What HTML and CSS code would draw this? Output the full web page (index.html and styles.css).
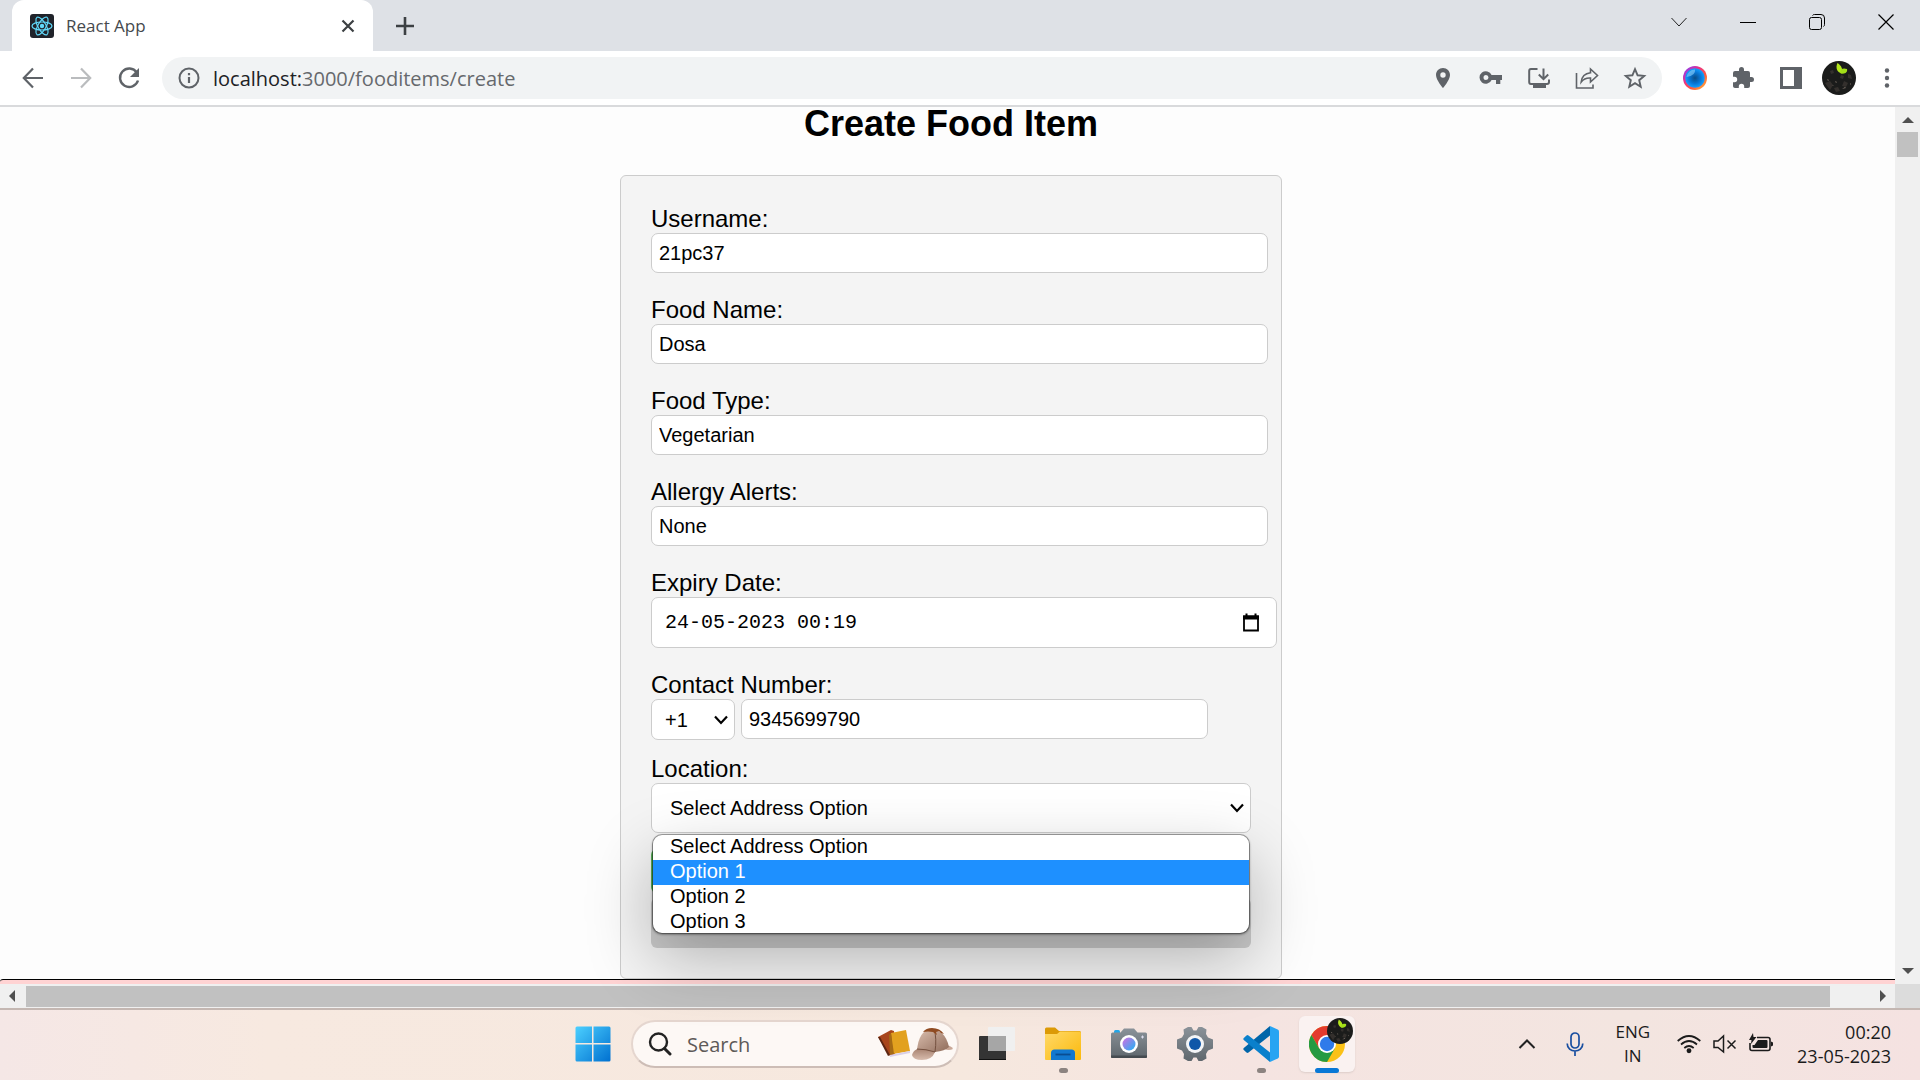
FILE: index.html
```html
<!DOCTYPE html>
<html lang="en">
<head>
<meta charset="utf-8">
<title>React App</title>
<link rel="stylesheet" href="styles.css">
</head>
<body>
<svg width="0" height="0" class="defs" aria-hidden="true">
  <defs>
    <linearGradient id="win" x1="0" y1="0" x2="1" y2="1"><stop offset="0" stop-color="#4cd0ff"/><stop offset="1" stop-color="#0070d0"/></linearGradient>
    <linearGradient id="fold" x1="0" y1="0" x2="1" y2="1"><stop offset="0" stop-color="#ffd968"/><stop offset="1" stop-color="#fbb90c"/></linearGradient>
    <linearGradient id="lens" x1="0" y1="0" x2="1" y2="1"><stop offset=".2" stop-color="#b07be6"/><stop offset="1" stop-color="#1cb4f4"/></linearGradient>
    <linearGradient id="grey" x1="0" y1="0" x2="0" y2="1"><stop offset="0" stop-color="#8a9299"/><stop offset="1" stop-color="#5f676d"/></linearGradient>
    <linearGradient id="hat" x1="0" y1="0" x2="1" y2="1"><stop offset="0" stop-color="#dcc0b0"/><stop offset="1" stop-color="#8f6b5a"/></linearGradient>
    <linearGradient id="brim" x1="0" y1="0" x2="0" y2="1"><stop offset="0" stop-color="#a98472"/><stop offset="1" stop-color="#d8bcae"/></linearGradient>
    <linearGradient id="ring" x1="0" y1="0" x2="1" y2="1"><stop offset=".1" stop-color="#8a3ff0"/><stop offset=".35" stop-color="#e8308c"/><stop offset=".65" stop-color="#ff5a3c"/><stop offset="1" stop-color="#ffc53a"/></linearGradient>
    <radialGradient id="orb"><stop offset="0" stop-color="#0a4c86"/><stop offset=".6" stop-color="#0878d8"/><stop offset="1" stop-color="#13a0ff"/></radialGradient>
    <symbol id="plant" viewBox="0 0 34 34">
      <circle cx="17" cy="17" r="17" fill="#1b1c1b"/>
      <path d="M3 22l5-2 3 4-3 5zM22 20l4 2-2 4-4-1zM12 27l4-1 2 4-4 1zM26 13l3 1 1 4-4-1zM8 10l3-1 1 3-3 1zM19 14l3 1-1 3-3-1z" fill="#34302d"/>
      <path d="M5 18l2 1-1 1zM13 20l2 1-1 1zM20 28l3-2 1 1zM28 22l1 1-1 1zM10 24l1 1 1 0z" fill="#7b6f66"/>
      <path d="M15.500 2c-2.500 5 0 10 4.500 10.500 1-4-.5-8-4.500-10.500z" fill="#b4e61c"/>
      <path d="M18 12c0-4 3-5.500 7-4 1 3.500-3 6-7 4z" fill="#a2de18"/>
    </symbol>
  </defs>
</svg>

<header class="tabs">
  <div class="tab">
    <svg class="favicon" viewBox="0 0 24 24"><rect width="24" height="24" rx="3" fill="#20232a"/><g fill="none" stroke="#61dafb" stroke-width="1.2"><ellipse cx="12" cy="12" rx="10" ry="4"/><ellipse cx="12" cy="12" rx="10" ry="4" transform="rotate(60 12 12)"/><ellipse cx="12" cy="12" rx="10" ry="4" transform="rotate(120 12 12)"/></g><circle cx="12" cy="12" r="2.2" fill="#61dafb"/></svg>
    <span class="tab-title">React App</span>
    <button class="icon-btn" aria-label="Close tab"><svg width="14" height="14" viewBox="0 0 14 14"><path d="M1.500 1.500l11 11M12.500 1.500l-11 11" stroke="#3c4043" stroke-width="2.200"/></svg></button>
  </div>
  <button class="icon-btn new-tab" aria-label="New tab"><svg width="18" height="18" viewBox="0 0 18 18"><path d="M9 0v18M0 9h18" stroke="#3c4043" stroke-width="2.600"/></svg></button>
  <div class="window-controls">
    <button class="icon-btn" aria-label="Search tabs"><svg width="16" height="16" viewBox="0 0 16 16"><path d="M.5 4L8 12l7.500-8" fill="none" stroke="#222"/></svg></button>
    <button class="icon-btn" aria-label="Minimize"><svg width="16" height="16" viewBox="0 0 16 16"><path d="M0 8.500h16" stroke="#000"/></svg></button>
    <button class="icon-btn" aria-label="Restore"><svg width="16" height="16" viewBox="0 0 16 16" fill="none" stroke="#000"><rect x=".5" y="3.500" width="12" height="12" rx="2"/><path d="M3.500 1.500Q4 .5 5.500.5H12Q15.500.5 15.500 4v6.500q0 1.500-1 2"/></svg></button>
    <button class="icon-btn" aria-label="Close"><svg width="16" height="16" viewBox="0 0 16 16"><path d="M.5.5l15 15M15.500.5l-15 15" stroke="#000" stroke-width="1.200"/></svg></button>
  </div>
</header>

<nav class="toolbar">
  <div class="nav-buttons">
    <button class="icon-btn" aria-label="Back"><svg width="24" height="24" viewBox="0 0 24 24"><path d="M22 12H3M12 2.500L2.800 12l9.200 9.500" fill="none" stroke="#5f6368" stroke-width="2.200"/></svg></button>
    <button class="icon-btn" aria-label="Forward"><svg width="24" height="24" viewBox="0 0 24 24"><path d="M2 12h19M12 2.500l9.200 9.500-9.200 9.500" fill="none" stroke="#babcbe" stroke-width="2.200"/></svg></button>
    <button class="icon-btn" aria-label="Reload"><svg width="24" height="24" viewBox="0 0 24 24"><path d="M19.800 6.500A9.200 9.200 0 1 0 21 14.500" fill="none" stroke="#5f6368" stroke-width="2.400"/><path d="M22 2v9h-9z" fill="#5f6368"/></svg></button>
  </div>
  <div class="omnibox">
    <svg width="22" height="22" viewBox="0 0 22 22"><circle cx="11" cy="11" r="9.500" fill="none" stroke="#5f6368" stroke-width="2"/><path d="M11 10v6M11 6v2.200" stroke="#5f6368" stroke-width="2.200"/></svg>
    <a class="url" href="#">localhost:<span class="path">3000/fooditems/create</span></a>
    <div class="omni-actions">
      <button class="icon-btn" aria-label="Location"><svg width="24" height="24" viewBox="0 0 24 24"><path d="M12 2C8 2 5 5 5 9c0 5 7 13 7 13s7-8 7-13c0-4-3-7-7-7zm0 9.700a2.700 2.700 0 1 1 0-5.400 2.700 2.700 0 0 1 0 5.400z" fill="#5f6368"/></svg></button>
      <button class="icon-btn" aria-label="Passwords"><svg width="24" height="24" viewBox="0 0 24 24"><path d="M12.600 9a6.300 6.300 0 1 0 0 5H17v4h4.300v-4H23V9zM7 14a2.500 2.500 0 1 1 0-5 2.500 2.500 0 0 1 0 5z" fill="#5f6368"/></svg></button>
      <button class="icon-btn" aria-label="Install"><svg width="24" height="24" viewBox="0 0 24 24"><path d="M10.500 3H4Q2.200 3 2.200 5v11Q2.200 18 4 18h16q2 0 2-2v-2.500M16.500 2.500v10M11.800 8.500l4.700 4.600 4.700-4.600" fill="none" stroke="#5f6368" stroke-width="2"/><path d="M6 18h13v4H6z" fill="#5f6368"/></svg></button>
      <button class="icon-btn" aria-label="Share"><svg width="24" height="24" viewBox="0 0 24 24" fill="none" stroke="#5f6368" stroke-width="1.600"><path d="M1.500 7v15h16.500v-3.500"/><path d="M15.500 3l7 6.500-7 6.500v-4c-4-.3-7 1-9.300 4 .5-5 3.500-8.500 9.300-9.200z"/></svg></button>
      <button class="icon-btn" aria-label="Bookmark"><svg width="24" height="24" viewBox="0 0 24 24"><path d="M12 3.200l2.600 6.100 6.600.6-5 4.300 1.500 6.500-5.700-3.500-5.700 3.500 1.500-6.500-5-4.300 6.600-.6z" fill="none" stroke="#5f6368" stroke-width="1.900"/></svg></button>
    </div>
  </div>
  <div class="extensions">
    <button class="icon-btn" aria-label="Extension"><svg width="24" height="24" viewBox="0 0 24 24"><circle cx="12" cy="12" r="12" fill="url(#ring)"/><circle cx="12" cy="12" r="9.800" fill="url(#orb)"/><path d="M3.500 11A8.500 8.500 0 0 1 12 3.500q1 6-8.500 7.500z" fill="#8fd0f8" opacity=".6"/></svg></button>
    <button class="icon-btn" aria-label="Extensions"><svg width="24" height="24" viewBox="0 0 24 24"><path d="M20.500 11H19V7a2 2 0 0 0-2-2h-4V3.500a2.500 2.500 0 0 0-5 0V5H4a2 2 0 0 0-2 2v3.800h1.500a2.700 2.700 0 0 1 0 5.400H2V20c0 1.100.9 2 2 2h3.800v-1.500a2.700 2.700 0 0 1 5.400 0V22H17a2 2 0 0 0 2-2v-4h1.500a2.500 2.500 0 0 0 0-5z" fill="#5f6368"/></svg></button>
    <button class="icon-btn" aria-label="Side panel"><svg width="24" height="24" viewBox="0 0 24 24"><path d="M1 1h22v22H1zM4 4v16h11V4z" fill="#5f6368" fill-rule="evenodd"/></svg></button>
    <button class="icon-btn" aria-label="Profile"><svg width="34" height="34"><use href="#plant"/></svg></button>
    <button class="icon-btn" aria-label="Menu"><svg width="24" height="24" viewBox="0 0 24 24" fill="#5f6368"><circle cx="12" cy="4.500" r="2.200"/><circle cx="12" cy="12" r="2.200"/><circle cx="12" cy="19.500" r="2.200"/></svg></button>
  </div>
</nav>

<div class="viewport">
  <main class="page">
    <div class="content">
    <h1>Create Food Item</h1>
    <form class="card">
      <div class="field"><label for="user">Username:</label><input id="user" class="text" type="text" value="21pc37"></div>
      <div class="field"><label for="food">Food Name:</label><input id="food" class="text" type="text" value="Dosa"></div>
      <div class="field"><label for="type">Food Type:</label><input id="type" class="text" type="text" value="Vegetarian"></div>
      <div class="field"><label for="allergy">Allergy Alerts:</label><input id="allergy" class="text" type="text" value="None"></div>
      <div class="field">
        <label for="expiry">Expiry Date:</label>
        <div class="date">
          <input id="expiry" type="text" value="24-05-2023 00:19">
          <button type="button" class="icon-btn" aria-label="Pick a date"><svg width="20" height="20" viewBox="0 0 20 20"><path d="M3 3.500h14v14H3z" fill="none" stroke="#000" stroke-width="1.800"/><path d="M2 2.500h16v4H2zM4.500.500h2v3h-2zM13.500.500h2v3h-2z"/></svg></button>
        </div>
      </div>
      <div class="field phone-field">
        <label for="phone">Contact Number:</label>
        <div class="phone">
          <div class="select code">
            <select aria-label="Country code"><option>+1</option></select>
            <svg width="14" height="10" viewBox="0 0 14 10"><path d="M1 1.500l6 6.500 6-6.500" fill="none" stroke="#000" stroke-width="2.200"/></svg>
          </div>
          <input id="phone" class="text" type="tel" value="9345699790">
        </div>
      </div>
      <div class="field location">
        <label for="location">Location:</label>
        <div class="select address">
          <select id="location"><option>Select Address Option</option><option>Option 1</option><option>Option 2</option><option>Option 3</option></select>
          <svg width="14" height="10" viewBox="0 0 14 10"><path d="M1 1.500l6 6.500 6-6.500" fill="none" stroke="#000" stroke-width="2.200"/></svg>
          <ul class="options" role="listbox" aria-label="Location">
            <li role="option">Select Address Option</li>
            <li role="option" class="active" aria-selected="true">Option 1</li>
            <li role="option">Option 2</li>
            <li role="option">Option 3</li>
          </ul>
        </div>
      </div>
      <div class="actions">
        <button type="button" class="locate" aria-label="Use location"></button>
        <button type="submit" class="submit" aria-label="Submit"></button>
      </div>
    </form>
    </div>
    <div class="alert-strip"></div>
  </main>
  <div class="vbar">
    <svg width="12" height="6" viewBox="0 0 12 6"><path d="M0 6l6-6 6 6z" fill="#505050"/></svg>
    <div class="thumb"></div>
    <svg width="12" height="6" viewBox="0 0 12 6"><path d="M0 0h12l-6 6z" fill="#505050"/></svg>
  </div>
  <div class="hbar">
    <svg width="6" height="12" viewBox="0 0 6 12"><path d="M6 0v12L0 6z" fill="#505050"/></svg>
    <div class="thumb"></div>
    <svg width="6" height="12" viewBox="0 0 6 12"><path d="M0 0v12l6-6z" fill="#505050"/></svg>
  </div>
  <div class="corner"></div>
</div>

<footer class="taskbar">
  <div class="apps">
    <button class="app" aria-label="Start"><svg width="36" height="36" viewBox="0 0 36 36" fill="url(#win)"><path d="M2 .500h15V17H.500V2Q.500.500 2 .500zM18.500.500H34q1.500 0 1.500 1.500v15h-17zM.500 18.500H17v17H2Q.500 35.500.500 34zM18.500 18.500h17V34q0 1.500-1.500 1.500H18.500z"/></svg></button>
    <div class="search">
      <svg width="24" height="24" viewBox="0 0 24 24"><circle cx="10.500" cy="10" r="8.500" fill="none" stroke="#222" stroke-width="2.400"/><path d="M16.500 16.500l5.500 5.500" stroke="#222" stroke-width="3" stroke-linecap="round"/></svg>
      <input type="search" aria-label="Search" placeholder="Search">
      <svg width="77" height="34" viewBox="0 0 77 34">
        <path d="M1 10L14 3l3 1 1 23-5 2z" fill="#a8451b"/><path d="M1 10l2 0 10 18-2 1z" fill="#5d2612"/>
        <path d="M14 6l15-3 4 21-17 3z" fill="#e2a11f"/><path d="M14 6l3 21-4 1-1-20z" fill="#a56a15"/><path d="M13 28l20-4v2l-20 4z" fill="#d9cfe8"/>
        <path d="M67 18q7 0 9 4-4 2-9 0z" fill="#c9a797"/>
        <path d="M40 23Q42 4 53 2q15 0 19 18-4 4-14 5z" fill="url(#hat)"/>
        <path d="M40 22q9 0 18 3-3 8-13 8-9 0-10-5 1-4 5-6z" fill="url(#brim)"/>
        <path d="M40 22q9 0 18 3M57 2q3 9 1 23" fill="none" stroke="#74503f"/>
        <path d="M46 5q3-4 9-4 8 0 12 6l-3-1-2-2-3 1 1 3-4-3q-5-1-10 0z" fill="#8f4b22"/>
      </svg>
    </div>
    <button class="app" aria-label="Task view"><svg width="36" height="36" viewBox="0 0 36 36"><rect y="10" width="27" height="24" rx="1" fill="#343434"/><rect y="33" width="27" height="1" fill="#111"/><rect x="9" y="1" width="27" height="24" rx="1" fill="#f0f0f0"/><path d="M9 10h18v15H10q-1 0-1-1z" fill="#a6a6a6"/></svg></button>
    <button class="app running" aria-label="File Explorer"><svg width="36" height="36" viewBox="0 0 36 36"><path d="M0 3q0-1.500 1.500-1.500H10L14 5H34.500Q36 5 36 6.500V12H0z" fill="#dc9a06"/><path d="M0 8h12l3-2.500h19.500Q36 5.500 36 7v26q0 1-1 1H1q-1 0-1-1z" fill="url(#fold)"/><path d="M6 34v-7q0-3.500 3.500-3.500h17Q30 23.500 30 27v7z" fill="#1278cf"/><path d="M10.500 28.500h15" stroke="#0a4d91" stroke-width="1.800"/></svg></button>
    <button class="app" aria-label="Camera"><svg width="36" height="36" viewBox="0 0 36 36"><path d="M3 7V5.500Q3 4 4.500 4h3Q9 4 9 5.500V7z" fill="#22a6e8"/><path d="M0 8q0-1.500 1.500-1.500h8L13 2.500h10l3.500 4h8Q36 6.500 36 8v23.500H0z" fill="url(#grey)"/><path d="M0 29.500h36V31q0 1-1 1H1q-1 0-1-1z" fill="#454b50"/><circle cx="18" cy="18" r="9" fill="#fff"/><circle cx="18" cy="18" r="6.500" fill="url(#lens)"/><path d="M31.500 9.500v3M30 11h3" stroke="#dde"/></svg></button>
    <button class="app" aria-label="Settings"><svg width="36" height="36" viewBox="0 0 36 36"><path d="M11 1h3.500l2 3.500h3L21.500 1H25l4.500 2.500-.5 4.500 2 3.500 5 2v9l-5 2-2 3.500.5 4.500L25 35h-3.500l-2-3.500h-3l-2 3.500H11l-4.500-2.500L7 28l-2-3.500-5-2v-9l5-2L7 8l-.5-4.500z" fill="url(#grey)"/><circle cx="18" cy="18" r="9" fill="#f3f5f7"/><circle cx="18" cy="18" r="6" fill="#0f57a8"/></svg></button>
    <button class="app running" aria-label="Visual Studio Code"><svg width="36" height="36" viewBox="0 0 36 36"><path d="M27 0v9.500L5.500 26.500Q4.500 27.300 3.500 26.500L.8 24Q-.2 23 .8 22z" fill="#0065a9"/><path d="M27 36v-9.500L5.500 9.500q-1-.8-2 0L.8 12q-1 1 0 2z" fill="#0a80cc"/><path d="M27 0l7.700 3.400Q36 4 36 5.500v25q0 1.500-1.300 2.100L27 36z" fill="#27a4f2"/></svg></button>
    <button class="app current" aria-label="Google Chrome">
      <svg width="44" height="50" viewBox="0 0 44 50"><circle cx="18" cy="32" r="18" fill="#fbc116"/><path d="M2.400 23A18 18 0 0 1 33.600 23L18 23.500l-7.800 13z" fill="#e33b2e"/><path d="M2.400 23A18 18 0 0 0 18 50l7.800-13.500H10.200z" fill="#259a42"/><circle cx="18" cy="32" r="9" fill="#fff"/><circle cx="18" cy="32" r="7.200" fill="#2f7bea"/><use href="#plant" x="18" y="6" width="26" height="26"/></svg>
    </button>
  </div>
  <div class="tray">
    <button class="icon-btn" aria-label="Hidden icons"><svg width="18" height="18" viewBox="0 0 18 18"><path d="M1.500 13L9 5.500l7.500 7.500" fill="none" stroke="#222" stroke-width="2"/></svg></button>
    <button class="icon-btn" aria-label="Microphone"><svg width="18" height="24" viewBox="0 0 18 24" fill="none" stroke="#1a4fa0" stroke-width="1.700"><rect x="5" y="1" width="8" height="15" rx="4"/><path d="M1.200 11.500c0 10 15.600 10 15.600 0M9 19v5"/></svg></button>
    <button class="lang">ENG<br>IN</button>
    <button class="status" aria-label="Network, sound and battery">
      <svg width="24" height="24" viewBox="0 0 24 24" fill="none" stroke="#1b1b1b" stroke-width="1.700"><path d="M.7 9q11.300-10 22.600 0M4 12.500q8-7 16 0M7.300 16q4.700-4 9.400 0"/><circle cx="12" cy="18.800" r="1.600" fill="#1b1b1b"/></svg>
      <svg width="24" height="24" viewBox="0 0 24 24" fill="none" stroke="#1b1b1b" stroke-width="1.500"><path d="M1 9h4l5.500-5v16L5 15.500H1z"/><path d="M14.500 8.500l8 8M22.500 8.500l-8 8"/></svg>
      <svg width="24" height="24" viewBox="0 0 24 24"><path d="M8 5.500h11q2 0 2 2v9q0 2-2 2H3q-2 0-2-2V11" fill="none" stroke="#1b1b1b" stroke-width="1.600"/><path d="M9 8h8.500q1 0 1 1v6q0 1-1 1H4.500q-1 0-1-1v-2h2zM22 9.500l2 1v3l-2 1zM4 1L0 8h2.500L2 12 7.500 5H4.500z" fill="#1b1b1b"/></svg>
    </button>
    <button class="clock">00:20<br>23-05-2023</button>
  </div>
</footer>
</body>
</html>
```
FILE: styles.css
```css
* { box-sizing: border-box; }

body {
  margin: 0;
  min-height: 100vh;
  display: grid;
  grid-template-rows: auto auto 1fr auto;
  font-family: "Open Sans", "Noto Sans", sans-serif;
  background: #fdfdfd;
  color: #000;
}

.defs { position: absolute; }

svg { display: block; flex: none; }

button { font: inherit; color: inherit; cursor: pointer; }

.icon-btn {
  display: flex;
  align-items: center;
  justify-content: center;
  padding: 0;
  border: 0;
  background: none;
}

/* Tab strip */
.tabs {
  display: flex;
  align-items: center;
  height: 51px;
  padding-left: 12px;
  background: #dee1e6;
}

.tab {
  display: flex;
  align-items: center;
  gap: 12px;
  width: 361px;
  height: 51px;
  padding: 0 18px;
  border-radius: 12px 12px 0 0;
  background: #fff;
}

.favicon { width: 24px; height: 24px; }

.tab-title { flex: 1; font-size: 17px; color: #45494d; }

.new-tab { margin-left: 23px; }

.window-controls {
  display: flex;
  gap: 53px;
  margin-left: auto;
  padding: 0 26px 8px 0;
}

/* Toolbar */
.toolbar {
  display: flex;
  align-items: center;
  height: 56px;
  padding: 0 21px;
  border-bottom: 2px solid #d9dadc;
  background: #fff;
}

.nav-buttons { display: flex; gap: 24px; margin-right: 21px; }

.omnibox {
  display: flex;
  flex: 1;
  align-items: center;
  gap: 13px;
  height: 42px;
  padding: 0 15px 0 16px;
  border-radius: 21px;
  background: #f1f3f4;
}

.url { flex: 1; font-size: 20px; color: #202124; text-decoration: none; }
.path { color: #66696d; }

.omni-actions { display: flex; gap: 24px; }

.extensions {
  display: flex;
  align-items: center;
  gap: 24px;
  margin-left: 21px;
}
.extensions .icon-btn { width: 24px; }

/* Page area and its scroll bars */
.viewport {
  display: grid;
  grid-template-columns: 1fr 25px;
  grid-template-rows: 1fr 24px;
}

.page {
  display: flex;
  flex-direction: column;
  font-family: "Liberation Sans", Arial, sans-serif;
}

.content { padding-left: 7px; }

h1 {
  margin: 0 0 34px;
  font-size: 36px;
  line-height: 34px;
  text-align: center;
}

.vbar, .hbar {
  display: flex;
  align-items: center;
  background: #f0f0f0;
}
.vbar { flex-direction: column; padding: 10px 0; }
.hbar { padding: 0 9px; }
.vbar svg:last-child { margin-top: auto; }
.hbar svg:last-child { margin-left: auto; }
.thumb { background: #c1c1c1; }
.vbar .thumb { width: 21px; height: 25px; margin-top: 9px; }
.hbar .thumb { flex: 1; height: 21px; margin: 0 50px 0 11px; }
.corner { background: #dcdcdc; }

.alert-strip {
  flex: none;
  height: 5px;
  margin-top: auto;
  border-top: 1px solid #000;
  border-top-left-radius: 3px;
  background: #ffd3d3;
}

/* Form */
.card {
  display: flex;
  flex-direction: column;
  gap: 23px;
  width: 662px;
  margin: 0 auto;
  padding: 29px 30px 30px;
  border: 1px solid #ccc;
  border-radius: 6px;
  background: #f4f4f4;
}

.field { display: flex; flex-direction: column; }

label { font-size: 24px; line-height: 28px; }

.text, .date, select {
  border: 1px solid #ccc;
  border-radius: 7px;
  background: #fff;
  font-family: inherit;
  font-size: 20px;
  color: #000;
}

.text { width: 617px; height: 40px; padding: 0 7px; }

.date {
  display: flex;
  align-items: center;
  width: 626px;
  height: 51px;
  padding: 0 15px 0 13px;
}

.date input {
  flex: 1;
  padding: 0;
  border: 0;
  background: none;
  font: 20px "Liberation Mono", monospace;
  color: #000;
}

.phone { display: flex; gap: 6px; }
.phone .text { width: 467px; }

.select { display: grid; align-items: center; position: relative; }
.select > select, .select > svg { grid-area: 1 / 1; }
.select > svg { justify-self: end; margin-right: 7px; }

select { appearance: none; width: 100%; height: 100%; margin: 0; }

.code { width: 84px; height: 41px; }
.code select { padding: 0 13px; }

.phone-field { margin-bottom: -8px; }

.address { height: 50px; }
.address select { padding: 0 18px; }

.options {
  position: absolute;
  top: 52px;
  left: 2px;
  right: 2px;
  z-index: 2;
  height: 98px;
  margin: 0;
  padding: 0;
  list-style: none;
  overflow: hidden;
  border-radius: 9px;
  background: #fff;
  font-size: 20px;
  line-height: 23px;
  box-shadow: 0 0 0 1px rgba(0, 0, 0, .3), 0 1px 2px 1px rgba(0, 0, 0, .3), 0 24px 66px rgba(0, 0, 0, .28);
}
.options li { height: 25px; padding: 0 17px; }
.options .active { background: #1e90ff; color: #fff; }

.actions { display: flex; flex-direction: column; gap: 5px; margin-top: -7px; }
.actions button { border: 0; border-radius: 6px; }
.locate { width: 300px; height: 44px; background: #5cb85c; }
.submit { height: 50px; background: #ccc; }

/* Taskbar */
.taskbar {
  display: grid;
  grid-template-columns: 1fr auto 1fr;
  align-items: center;
  height: 72px;
  padding-bottom: 2px;
  border-top: 2px solid #c4b7b2;
  background: linear-gradient(90deg, #f5e7e6, #f7e9e0 14%, #f6e8de 50%, #f5e4e1 65%, #f3e5e0 85%, #f5e2e1);
}

.apps { grid-column: 2; display: flex; align-items: center; gap: 10px; }

.app {
  display: flex;
  align-items: center;
  justify-content: center;
  width: 56px;
  height: 56px;
  padding: 0;
  border: 0;
  border-radius: 6px;
  background: none;
  position: relative;
}
.running::after, .current::after {
  content: "";
  position: absolute;
  bottom: -1px;
  width: 9px;
  height: 5px;
  border-radius: 3px;
  background: #8c8380;
}
.current { align-items: flex-start; background: #faf2f1; box-shadow: 0 1px 2px #dccdc9; }
.current svg { margin: -4px 0 0 8px; }
.current::after { width: 24px; background: #0878d6; }

.search {
  display: flex;
  align-items: center;
  gap: 15px;
  width: 328px;
  height: 48px;
  padding: 0 3px 0 15px;
  border: 2px solid #e5d6cf;
  border-bottom-color: #cdbdb6;
  border-radius: 24px;
  background: #fdf8f5;
}
.search input {
  flex: 1;
  min-width: 0;
  padding: 0;
  border: 0;
  background: none;
  font: 20px "Open Sans", "Noto Sans", sans-serif;
}
.search input::placeholder { color: #5e5a58; opacity: 1; }

.tray {
  display: flex;
  align-items: center;
  justify-content: flex-end;
  padding-right: 29px;
  font-size: 17px;
  line-height: 24px;
  color: #1b1b1b;
}
.tray > button { padding: 0; border: 0; background: none; }
.lang { margin-left: 31px; text-align: center; }
.tray .icon-btn + .icon-btn { margin-left: 30px; }
.tray > .lang { margin-left: 31px; }
.tray > .status { display: flex; gap: 12px; margin: 0 24px 0 27px; }
.tray > .clock { font-size: 18px; text-align: right; }
```
